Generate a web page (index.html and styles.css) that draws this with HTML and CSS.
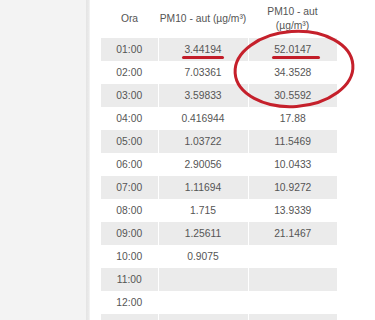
FILE: index.html
```html
<!DOCTYPE html>
<html>
<head>
<meta charset="utf-8">
<link rel="stylesheet" href="styles.css">
</head>
<body>
<div class="page">
  <div class="side"></div>
  <div class="edge"></div>
  <div class="main">
    <div class="wrap">
      <table class="data">
        <thead>
          <tr><th class="c1">Ora</th><th class="c2">PM10 - aut (µg/m³)</th><th class="c3">PM10 - aut<br>(µg/m³)</th></tr>
        </thead>
        <tbody>
          <tr class="odd"><td>01:00</td><td><span class="mark">3.44194</span></td><td><span class="mark wide">52.0147</span></td></tr>
          <tr><td>02:00</td><td>7.03361</td><td>34.3528</td></tr>
          <tr class="odd"><td>03:00</td><td>3.59833</td><td>30.5592</td></tr>
          <tr><td>04:00</td><td>0.416944</td><td>17.88</td></tr>
          <tr class="odd"><td>05:00</td><td>1.03722</td><td>11.5469</td></tr>
          <tr><td>06:00</td><td>2.90056</td><td>10.0433</td></tr>
          <tr class="odd"><td>07:00</td><td>1.11694</td><td>10.9272</td></tr>
          <tr><td>08:00</td><td>1.715</td><td>13.9339</td></tr>
          <tr class="odd"><td>09:00</td><td>1.25611</td><td>21.1467</td></tr>
          <tr><td>10:00</td><td>0.9075</td><td></td></tr>
          <tr class="odd"><td>11:00</td><td></td><td></td></tr>
          <tr><td>12:00</td><td></td><td></td></tr>
          <tr class="odd"><td></td><td></td><td></td></tr>
        </tbody>
      </table>
      <svg class="circle" width="130" height="90" viewBox="0 0 130 90">
        <ellipse cx="65" cy="45" rx="59" ry="37.5" fill="none" stroke="#c5202b" stroke-width="3" transform="rotate(-4 65 45)"/>
      </svg>
    </div>
  </div>
</div>
</body>
</html>
```
FILE: styles.css
```css
html, body {
  margin: 0;
  padding: 0;
}
body {
  background: #f3f3f3;
  font-family: "Liberation Sans", Arial, sans-serif;
  width: 375px;
  height: 320px;
  overflow: hidden;
}
.page {
  display: flex;
  height: 320px;
}
.side {
  width: 86px;
  background: #f3f3f3;
}
.edge {
  width: 4px;
  background: linear-gradient(to right, #e4e4e4, #e9e9e9 60%, #f6f6f6);
}
.main {
  flex: 1;
  background: #fff;
  padding-left: 11px;
}
.wrap {
  position: relative;
  width: 236px;
}
.data {
  border-collapse: collapse;
  width: 236px;
  table-layout: fixed;
  color: #555;
  font-size: 10.3px;
}
.data th {
  font-weight: normal;
  height: 38px;
  padding: 0;
  line-height: 14px;
  text-align: center;
  vertical-align: middle;
}
.data .c1 { width: 57px; }
.data .c2 { width: 90px; }
.data .c3 { width: 89px; }
.data td {
  height: 23px;
  padding: 0;
  text-align: center;
  vertical-align: middle;
  border-left: 1px solid #fff;
}
.data td:first-child {
  border-left: none;
}
.data tr.odd td {
  background: #ebebeb;
}
.mark {
  display: inline-block;
  position: relative;
}
.mark::after {
  content: "";
  position: absolute;
  left: -2px;
  right: -2px;
  bottom: -4px;
  height: 3px;
  border-radius: 2px;
  background: #c21d29;
}
.mark.wide::after {
  right: -9px;
}
.circle {
  position: absolute;
  left: 128px;
  top: 24px;
}
```
